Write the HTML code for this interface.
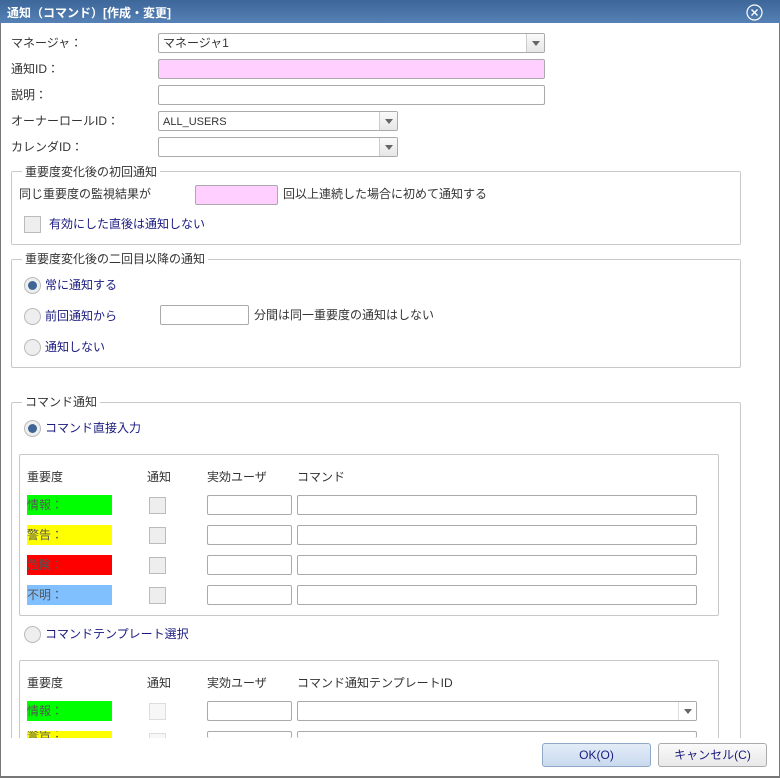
<!DOCTYPE html>
<html style="width:780px;height:778px;overflow:hidden"><head><meta charset="utf-8"><style>
*{box-sizing:border-box;margin:0;padding:0}
body{width:780px;height:778px;background:#fff;font-family:"Liberation Sans","Noto Sans CJK JP",sans-serif;font-size:12px;color:#333;position:relative;overflow:hidden}
.clip{position:absolute;left:0;top:0;width:780px;height:738px;overflow:hidden}
.a{position:absolute;white-space:nowrap;line-height:14px}
.tb{position:absolute;left:0;top:0;width:780px;height:23px;background:linear-gradient(#3d6699,#5581b6);color:#fff;font-weight:bold;font-size:12px;padding:4px 0 0 7px}
.in{position:absolute;border:1px solid #aaa;border-radius:2px;background:#fff;height:20px}
.pk{background:#ffd0ff}
.sel .ar{position:absolute;right:0;top:0;width:18px;height:18px;border-left:1px solid #ccc;background:linear-gradient(#fafafa,#e6e6e6)}
.sel .ar:after{content:"";position:absolute;left:5px;top:7px;border:4px solid transparent;border-top:5px solid #666}
.fs{position:absolute;border:1px solid #c8c8c8;border-radius:2px}
.lg{position:absolute;background:#fff;padding:0 3px;line-height:14px}
.cb{position:absolute;width:17px;height:17px;border:1px solid #bbb;background:#eee}
.rd{position:absolute;width:17px;height:17px;border:1px solid #bbb;border-radius:50%;background:#eee}
.rd.on:after{content:"";position:absolute;left:3px;top:3px;width:9px;height:9px;border-radius:50%;background:#3f6596}
.bl{color:#1a1a80}
.sv{position:absolute;width:85px;height:20px;color:#555;line-height:20px;overflow:hidden}
.btn{position:absolute;height:24px;border:1px solid #aaa;border-radius:3px;text-align:center;line-height:22px;color:#1a1a80}
</style></head><body>
<div class="clip">
<div class="a" style="left:11px;top:36px">マネージャ：</div>
<div class="in sel" style="left:158px;top:33px;width:387px"><span class="a" style="left:4px;top:2px;color:#333">マネージャ1</span><div class="ar"></div></div>
<div class="a" style="left:11px;top:62px">通知ID：</div>
<div class="in pk" style="left:158px;top:59px;width:387px"></div>
<div class="a" style="left:11px;top:88px">説明：</div>
<div class="in" style="left:158px;top:85px;width:387px"></div>
<div class="a" style="left:11px;top:114px">オーナーロールID：</div>
<div class="in sel" style="left:158px;top:111px;width:240px"><span class="a" style="left:4px;top:3px;font-size:11px">ALL_USERS</span><div class="ar"></div></div>
<div class="a" style="left:11px;top:140px">カレンダID：</div>
<div class="in sel" style="left:158px;top:137px;width:240px"><div class="ar"></div></div>

<div class="fs" style="left:11px;top:171px;width:730px;height:74px"></div>
<div class="lg" style="left:22px;top:165px">重要度変化後の初回通知</div>
<div class="a" style="left:19px;top:187px">同じ重要度の監視結果が</div>
<div class="in pk" style="left:195px;top:185px;width:83px"></div>
<div class="a" style="left:283px;top:187px">回以上連続した場合に初めて通知する</div>
<div class="cb" style="left:24px;top:216px"></div>
<div class="a bl" style="left:49px;top:217px">有効にした直後は通知しない</div>

<div class="fs" style="left:11px;top:259px;width:730px;height:109px"></div>
<div class="lg" style="left:22px;top:252px">重要度変化後の二回目以降の通知</div>
<div class="rd on" style="left:24px;top:277px"></div><div class="a bl" style="left:45px;top:278px">常に通知する</div>
<div class="rd" style="left:24px;top:308px"></div><div class="a bl" style="left:45px;top:309px">前回通知から</div>
<div class="in" style="left:160px;top:305px;width:89px"></div>
<div class="a" style="left:254px;top:308px">分間は同一重要度の通知はしない</div>
<div class="rd" style="left:24px;top:339px"></div><div class="a bl" style="left:45px;top:340px">通知しない</div>

<div class="fs" style="left:11px;top:402px;width:730px;height:345px"></div>
<div class="lg" style="left:22px;top:395px">コマンド通知</div>
<div class="rd on" style="left:24px;top:420px"></div><div class="a bl" style="left:45px;top:421px">コマンド直接入力</div>

<div class="fs" style="left:19px;top:454px;width:700px;height:162px"></div>
<div class="a" style="left:27px;top:470px">重要度</div><div class="a" style="left:147px;top:470px">通知</div><div class="a" style="left:207px;top:470px">実効ユーザ</div><div class="a" style="left:297px;top:470px">コマンド</div>

<div class="sv" style="left:27px;top:495px;background:#00ff00">情報：</div><div class="cb" style="left:149px;top:497px"></div><div class="in" style="left:207px;top:495px;width:85px"></div><div class="in" style="left:297px;top:495px;width:400px"></div>
<div class="sv" style="left:27px;top:525px;background:#ffff00">警告：</div><div class="cb" style="left:149px;top:527px"></div><div class="in" style="left:207px;top:525px;width:85px"></div><div class="in" style="left:297px;top:525px;width:400px"></div>
<div class="sv" style="left:27px;top:555px;background:#ff0000">危険：</div><div class="cb" style="left:149px;top:557px"></div><div class="in" style="left:207px;top:555px;width:85px"></div><div class="in" style="left:297px;top:555px;width:400px"></div>
<div class="sv" style="left:27px;top:585px;background:#80c0ff">不明：</div><div class="cb" style="left:149px;top:587px"></div><div class="in" style="left:207px;top:585px;width:85px"></div><div class="in" style="left:297px;top:585px;width:400px"></div>

<div class="rd" style="left:24px;top:626px"></div><div class="a bl" style="left:45px;top:627px">コマンドテンプレート選択</div>

<div class="fs" style="left:19px;top:660px;width:700px;height:85px"></div>
<div class="a" style="left:27px;top:676px">重要度</div><div class="a" style="left:147px;top:676px">通知</div><div class="a" style="left:207px;top:676px">実効ユーザ</div><div class="a" style="left:297px;top:676px">コマンド通知テンプレートID</div>
<div class="sv" style="left:27px;top:701px;background:#00ff00">情報：</div><div class="cb" style="left:149px;top:703px;background:#f7f7f7;border-color:#ddd"></div><div class="in" style="left:207px;top:701px;width:85px"></div><div class="in sel" style="left:297px;top:701px;width:400px"><div class="ar" style="background:#fff;border-left-color:#ddd"></div></div>
<div class="sv" style="left:27px;top:731px;height:7px;background:#ffff00;line-height:6px">警告：</div><div class="cb" style="left:149px;top:733px;height:5px;background:#f7f7f7;border-color:#ddd;border-bottom:none"></div><div class="in" style="left:207px;top:731px;width:85px;height:7px;border-bottom:none"></div><div class="in" style="left:297px;top:731px;width:400px;height:7px;border-bottom:none"></div>
</div>

<div class="tb">通知（コマンド）[作成・変更]</div>
<svg style="position:absolute;left:746px;top:4px" width="17" height="17"><circle cx="8.5" cy="8.5" r="7.5" fill="none" stroke="#fff" stroke-width="1.2"/><path d="M5.5 5.5L11.5 11.5M11.5 5.5L5.5 11.5" stroke="#fff" stroke-width="1.4"/></svg>
<div style="position:absolute;left:0;top:776px;width:780px;height:2px;background:#777"></div>
<div style="position:absolute;left:0;top:23px;width:1px;height:753px;background:#777"></div>
<div style="position:absolute;left:779px;top:23px;width:1px;height:753px;background:#777"></div>
<div class="btn" style="left:542px;top:743px;width:109px;background:linear-gradient(#e3ecf7,#c9daee);border-color:#8fa8c8">OK(O)</div>
<div class="btn" style="left:658px;top:743px;width:109px;background:linear-gradient(#fafafa,#e8e8e8)">キャンセル(C)</div>
</body></html>
